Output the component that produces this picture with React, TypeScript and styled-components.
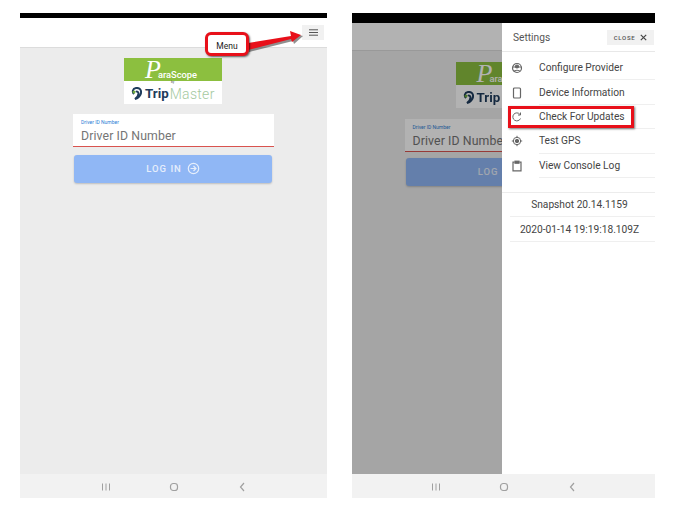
import React from "react";
import styled, { createGlobalStyle } from "styled-components";

const Global = createGlobalStyle`
  html, body { margin: 0; padding: 0; background: #fff; }
  #root { width: 677px; height: 516px; overflow: hidden; }
  * { box-sizing: border-box; }
`;

const Page = styled.div`
  position: relative;
  width: 677px;
  height: 516px;
  display: flex;
  align-items: flex-start;
  gap: 25px;
  padding: 13px 0 0 20px;
  font-family: Roboto, "Liberation Sans", sans-serif;
  filter: blur(0.5px);
`;

const Phone = styled.div<{ $w: number }>`
  position: relative;
  width: ${(p) => p.$w}px;
  height: 485px;
  display: flex;
  flex-direction: column;
`;

const StatusBar = styled.div<{ $h: number }>`
  height: ${(p) => p.$h}px;
  background: #000;
  flex: none;
`;

const Screen = styled.div`
  position: relative;
  flex: 1;
  display: flex;
  flex-direction: column;
  background: #ececec;
`;

const Header = styled.div<{ $h: number }>`
  height: ${(p) => p.$h}px;
  flex: none;
  background: #fff;
  border-bottom: 1px solid #dcdcdc;
  display: flex;
  justify-content: flex-end;
  padding: 7px 3px 0 0;
`;

const MenuButton = styled.div`
  width: 22px;
  height: 15px;
  background: #f1f1f1;
  display: flex;
  align-items: center;
  justify-content: center;
`;

const Body = styled.div<{ $top: number; $left: number; $gap: number }>`
  flex: 1;
  display: flex;
  flex-direction: column;
  align-items: center;
  padding-top: ${(p) => p.$top}px;
  padding-left: ${(p) => p.$left}px;
  gap: ${(p) => p.$gap}px;
`;

const Logo = styled.div<{ $below: number }>`
  width: 98px;
  height: 46px;
  margin: 0 1px ${(p) => p.$below}px 0;
  display: flex;
  flex-direction: column;
`;

const LogoTop = styled.div`
  height: 23px;
  background: #8cbf3f;
  color: #fff;
  display: flex;
  align-items: flex-end;
  justify-content: center;
  font-size: 9.3px;
  font-weight: 500;
  line-height: 11px;
  padding: 0 4px 1px 0;
`;

const LogoP = styled.span`
  font-family: "Liberation Serif", serif;
  font-style: italic;
  font-size: 26px;
  line-height: 21px;
  margin-right: -3px;
`;

const LogoBottom = styled.div`
  position: relative;
  height: 23px;
  background: #fff;
  display: flex;
  align-items: center;
  padding: 2px 0 0 7px;
  gap: 3px;
`;

const LogoBy = styled.span`
  position: absolute;
  top: -1px;
  left: 47px;
  font-size: 3px;
  color: #444;
`;

const LogoTrip = styled.span`
  font-size: 13.3px;
  line-height: 14px;
  font-weight: 700;
  color: #1f3c5c;
`;

const LogoMaster = styled.span`
  margin-left: -2px;
  font-size: 14px;
  line-height: 14px;
  font-weight: 300;
  color: #a5c9a0;
  letter-spacing: 0.3px;
`;

const Field = styled.div`
  width: 201px;
  height: 33px;
  background: #fff;
  border-bottom: 1px solid #d9534f;
  padding: 5px 0 0 8px;
  display: flex;
  flex-direction: column;
`;

const FieldLabel = styled.div`
  font-size: 5px;
  line-height: 6px;
  color: #2f7fd6;
`;

const FieldValue = styled.div`
  font-size: 12.3px;
  line-height: 18px;
  margin-top: 2px;
  color: #757575;
  letter-spacing: 0.1px;
  white-space: nowrap;
`;

const LoginButton = styled.div`
  width: 198px;
  height: 28px;
  margin-right: 1px;
  background: #90b7f5;
  border-radius: 3px;
  box-shadow: 0 1px 2px rgba(0, 0, 0, 0.2);
  color: #e6eefb;
  display: flex;
  align-items: center;
  justify-content: center;
  gap: 5px;
  padding-bottom: 1px;
  font-size: 9.5px;
  font-weight: 500;
  letter-spacing: 1px;
`;

const NavBar = styled.div`
  height: 24px;
  flex: none;
  background: #f2f2f2;
  display: flex;
  align-items: center;
  justify-content: center;
  gap: 56px;
  padding-top: 2px;
`;

const NavIcon = styled.svg`
  width: 12px;
  height: 12px;
  flex: none;
  color: #a0a0a0;
`;

const Scrim = styled.div`
  position: absolute;
  inset: 0;
  background: rgba(0, 0, 0, 0.3);
`;

const Drawer = styled.div`
  position: absolute;
  top: 0;
  right: 0;
  bottom: 0;
  width: 153px;
  background: #fff;
  display: flex;
  flex-direction: column;
`;

const DrawerHeader = styled.div`
  height: 29px;
  flex: none;
  border-bottom: 1px solid #e8e8e8;
  display: flex;
  align-items: center;
  justify-content: space-between;
  padding: 0 1px 0 11px;
  font-size: 10.2px;
  color: #555;
`;

const CloseButton = styled.div`
  width: 47px;
  height: 15px;
  background: #f1f1f1;
  display: flex;
  align-items: center;
  justify-content: center;
  gap: 5px;
  font-size: 6px;
  font-weight: 500;
  letter-spacing: 0.7px;
  color: #555;
`;

const MenuList = styled.div`
  padding: 4px 0 14px;
  border-bottom: 1px solid #ececec;
  display: flex;
  flex-direction: column;
`;

const MenuItem = styled.div`
  height: 24.4px;
  display: flex;
  align-items: center;
`;

const MenuIconSlot = styled.div`
  width: 37px;
  flex: none;
  display: flex;
  padding-left: 9px;
  color: #666;
`;

const MenuLabel = styled.div`
  flex: 1;
  height: 100%;
  display: flex;
  align-items: center;
  border-bottom: 1px solid #efefef;
  font-size: 10.2px;
  color: #444;
  white-space: nowrap;
`;

const InfoRow = styled.div`
  height: 24.4px;
  margin-left: 8px;
  display: flex;
  align-items: center;
  justify-content: center;
  padding-right: 6px;
  border-bottom: 1px solid #efefef;
  font-size: 10.2px;
  color: #444;
  white-space: nowrap;
`;

const Callout = styled.div`
  position: absolute;
  left: 205px;
  top: 32px;
  width: 44px;
  height: 24px;
  background: #fff;
  border: 3px solid #e8101a;
  border-radius: 6px;
  box-shadow: 1px 1px 2px rgba(0, 0, 0, 0.6);
  display: flex;
  align-items: flex-end;
  justify-content: center;
  padding-bottom: 2px;
  font-size: 8.5px;
  line-height: 10px;
  color: #222;
`;

const Arrow = styled.svg`
  position: absolute;
  left: 246px;
  top: 26px;
  width: 58px;
  height: 26px;
`;

const Highlight = styled.div`
  position: absolute;
  left: 508px;
  top: 106px;
  width: 126px;
  height: 22px;
  border: 3px solid #e8101a;
  box-shadow: 1px 1px 2px rgba(0, 0, 0, 0.55);
`;

const Swirl = () => (
  <svg width="11" height="13" viewBox="0 0 11 13" fill="none">
    <path d="M3 7C1 5 1.500 1.500 5 1c3.500-.5 5.500 2 5 5-.5 3-3 5-6 6 2-1.500 3.500-3.500 3.500-5.500C7.500 5 6 4 5 5" stroke="#1f3c5c" strokeWidth="2" />
    <circle cx="3" cy="5" r="1.500" fill="#6fae3c" />
  </svg>
);

const LoginIcon = () => (
  <svg width="13" height="13" viewBox="0 0 13 13" fill="none" stroke="#e6eefb" strokeWidth="1.200">
    <circle cx="6.500" cy="6.500" r="5.200" />
    <path d="M3.500 6.500h5.500M6.500 4l2.500 2.500L6.500 9" />
  </svg>
);

const Nav = () => (
  <NavBar>
    <NavIcon viewBox="0 0 12 12" fill="none" stroke="currentColor" strokeWidth="1">
      <path d="M2.500 2.500v7M6 2.500v7M9.500 2.500v7" />
    </NavIcon>
    <NavIcon viewBox="0 0 12 12" fill="none" stroke="currentColor" strokeWidth="1.200">
      <rect x="2.500" y="2.500" width="7" height="7" rx="2.800" />
    </NavIcon>
    <NavIcon viewBox="0 0 12 12" fill="none" stroke="currentColor" strokeWidth="1.200">
      <path d="M8 2 4.500 6 8 10" />
    </NavIcon>
  </NavBar>
);

const LoginForm = ({ top, left, gap, logoBelow }: { top: number; left: number; gap: number; logoBelow: number }) => (
  <Body $top={top} $left={left} $gap={gap}>
    <Logo $below={logoBelow}>
      <LogoTop>
        <LogoP>P</LogoP>araScope
      </LogoTop>
      <LogoBottom>
        <LogoBy>by</LogoBy>
        <Swirl />
        <LogoTrip>Trip</LogoTrip>
        <LogoMaster>Master</LogoMaster>
      </LogoBottom>
    </Logo>
    <Field>
      <FieldLabel>Driver ID Number</FieldLabel>
      <FieldValue>Driver ID Number</FieldValue>
    </Field>
    <LoginButton>
      LOG IN <LoginIcon />
    </LoginButton>
  </Body>
);

const iconProps = {
  width: 12,
  height: 12,
  viewBox: "0 0 12 12",
  fill: "none",
  stroke: "currentColor",
  strokeWidth: 1.2,
};

const menuItems: { label: string; icon: React.ReactNode }[] = [
  {
    label: "Configure Provider",
    icon: (
      <svg {...iconProps}>
        <circle cx="6" cy="6" r="4.500" />
        <path d="M1.800 5h8.400M3 9.500C3.500 7.800 8.500 7.800 9 9.500" />
        <circle cx="6" cy="4.500" r="1.500" fill="currentColor" />
      </svg>
    ),
  },
  {
    label: "Device Information",
    icon: (
      <svg {...iconProps}>
        <rect x="2.500" y="1" width="7" height="10" rx="1" />
      </svg>
    ),
  },
  {
    label: "Check For Updates",
    icon: (
      <svg {...iconProps} strokeWidth={1}>
        <path d="M9.500 7.500A4 4 0 1 1 8.800 3.200" />
        <path d="M9.500 1.500v2.500H7" />
      </svg>
    ),
  },
  {
    label: "Test GPS",
    icon: (
      <svg {...iconProps} strokeWidth={1}>
        <circle cx="6" cy="6" r="3.700" />
        <circle cx="6" cy="6" r="1.700" fill="currentColor" />
        <path d="M6 .8v1.500M6 9.700v1.500M.8 6h1.500M9.700 6h1.500" />
      </svg>
    ),
  },
  {
    label: "View Console Log",
    icon: (
      <svg {...iconProps}>
        <path d="M3.500 2.200H2v8.600h8V2.200H8.500" />
        <rect x="4" y="1.200" width="4" height="2" fill="currentColor" />
      </svg>
    ),
  },
];

export default function App() {
  return (
    <>
      <Global />
      <Page>
        <Phone $w={307}>
          <StatusBar $h={5} />
          <Screen>
            <Header $h={30}>
              <MenuButton>
                <svg width="9" height="7" viewBox="0 0 9 7" fill="none" stroke="#555" strokeWidth="1">
                  <path d="M0 .8h9M0 3.500h9M0 6.200h9" />
                </svg>
              </MenuButton>
            </Header>
            <LoginForm top={10} left={0} gap={8} logoBelow={2} />
          </Screen>
          <Nav />
        </Phone>
        <Phone $w={303}>
          <StatusBar $h={10} />
          <Screen>
            <Header $h={28} />
            <LoginForm top={11} left={3} gap={6} logoBelow={5} />
            <Scrim />
            <Drawer>
              <DrawerHeader>
                Settings
                <CloseButton>
                  CLOSE
                  <svg width="7" height="7" viewBox="0 0 7 7" stroke="#444" strokeWidth="1.200">
                    <path d="M.8.8l5.400 5.400M6.200.8.800 6.200" />
                  </svg>
                </CloseButton>
              </DrawerHeader>
              <MenuList>
                {menuItems.map((m) => (
                  <MenuItem key={m.label}>
                    <MenuIconSlot>{m.icon}</MenuIconSlot>
                    <MenuLabel>{m.label}</MenuLabel>
                  </MenuItem>
                ))}
              </MenuList>
              <InfoRow>Snapshot 20.14.1159</InfoRow>
              <InfoRow>2020-01-14 19:19:18.109Z</InfoRow>
            </Drawer>
          </Screen>
          <Nav />
        </Phone>
        <Arrow viewBox="0 0 58 26">
          <path d="M2 18 46 11l-1-5 11 3-9 8-1-3L2 25Z" fill="#333" opacity="0.55" transform="translate(1 1)" />
          <path d="M2 17 45 10l-1-5 11 4-9 7-1-3L2 24Z" fill="#e8101a" />
        </Arrow>
        <Callout>Menu</Callout>
        <Highlight />
      </Page>
    </>
  );
}
